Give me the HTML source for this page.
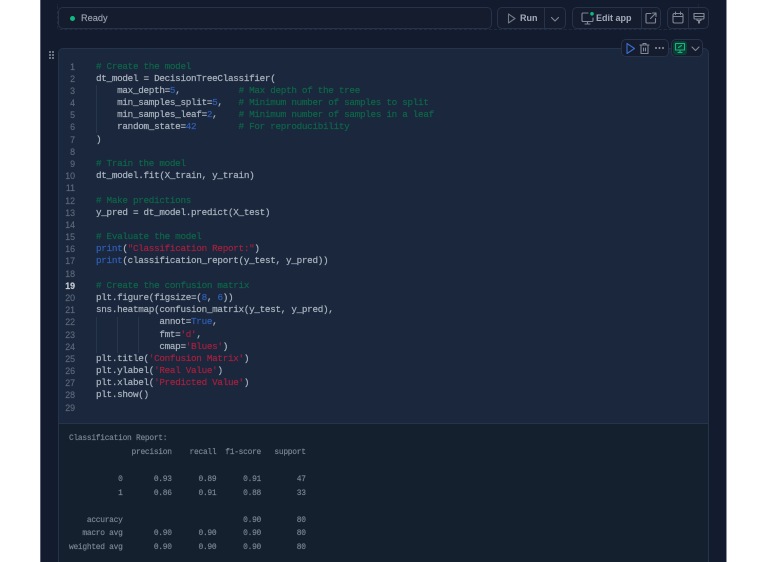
<!DOCTYPE html>
<html><head><meta charset="utf-8">
<style>
html,body{margin:0;padding:0;background:#fff;}
#p{position:relative;width:768px;height:562px;overflow:hidden;background:#fff;font-family:"Liberation Sans",sans-serif;}
#m{position:absolute;left:41px;top:0;width:685px;height:562px;background:#131b2e;border-left:1px solid #5b6472;border-right:1px solid #8b93a0;box-sizing:content-box;margin-left:-1px;}
.a{position:absolute;box-sizing:border-box;}
#cell{left:58px;top:48px;width:651px;height:514px;background:#1a273c;border:1px solid #24344a;border-bottom:0;border-radius:5px 5px 0 0;}
#out{left:58px;top:423px;width:651px;height:139px;background:#15202f;border:1px solid #24344a;border-bottom:0;}
.l{position:absolute;font-family:"Liberation Mono",monospace;font-size:9.3px;letter-spacing:-.3px;line-height:12px;white-space:pre;color:#aab3bf;left:96px;height:12px;margin-top:.6px;-webkit-text-stroke:.2px currentColor;filter:blur(.25px);}
.n{position:absolute;font-family:"Liberation Sans",sans-serif;font-size:8.8px;line-height:12px;color:#5c6a7c;left:60px;width:15px;text-align:right;height:12px;margin-top:.5px;-webkit-text-stroke:.15px currentColor;filter:blur(.2px);}
.c{color:#0e6649}.k{color:#2f5fb5}.s{color:#a3213f}
.o{position:absolute;left:69px;font-family:"Liberation Mono",monospace;font-size:7.9px;letter-spacing:-.27px;line-height:10px;white-space:pre;color:#7c8796;margin-top:1.300px;-webkit-text-stroke:.15px currentColor;filter:blur(.2px);}
.g{position:absolute;width:1px;background:#26364b;}
.btn{border:1px solid #26334a;background:#141c2e;border-radius:5px;}
.sep{position:absolute;top:0;bottom:0;width:1px;background:#26334a;}
svg{position:absolute;fill:none;stroke:#7f8997;stroke-width:1.1;stroke-linecap:round;stroke-linejoin:round;}
</style></head><body>
<div id="p">
<div id="m"></div>

<div class="a" style="left:57px;top:4px;width:642px;height:26px;border:1px dashed #222c3f;border-top:0;border-right:1px dashed #222c3f;border-radius:0 0 3px 3px;"></div>

<div class="a btn" style="left:58px;top:7px;width:434px;height:22px;"></div>
<div class="a" style="left:70px;top:16px;width:5px;height:5px;border-radius:50%;background:#10b981;"></div>
<div class="a" style="left:81px;top:12px;font-size:9.2px;line-height:12px;color:#9aa3b0;-webkit-text-stroke:.15px #9aa3b0;">Ready</div>

<div class="a btn" style="left:497px;top:7px;width:69px;height:22px;">
  <div class="sep" style="left:46px;"></div>
  <svg style="left:7px;top:4px" width="14" height="14" viewBox="0 0 14 14"><path d="M3.500 2v9l6.500-4.500z" stroke="#6f7987"/></svg>
  <div class="a" style="left:22px;top:4px;font-size:9px;font-weight:bold;line-height:12px;color:#a3acb8;">Run</div>
  <svg style="left:51px;top:5px" width="12" height="12" viewBox="0 0 12 12"><path d="M2.500 4.500L6 8l3.500-3.500"/></svg>
</div>

<div class="a btn" style="left:572px;top:7px;width:89px;height:22px;">
  <div class="sep" style="left:68px;"></div>
  <svg style="left:7px;top:3px" width="16" height="15" viewBox="0 0 16 15"><path d="M8 2H3a1 1 0 0 0-1 1v6.500a1 1 0 0 0 1 1h9a1 1 0 0 0 1-1V7M7.500 10.500v2.500M5 13h5"/><circle cx="12" cy="2.800" r="1.800" fill="#10b981" stroke="none"/></svg>
  <div class="a" style="left:23px;top:4px;font-size:9px;font-weight:bold;line-height:12px;color:#a3acb8;white-space:nowrap;">Edit app</div>
  <svg style="left:71px;top:3px" width="14" height="14" viewBox="0 0 14 14"><path d="M7 2.500H3a1 1 0 0 0-1 1v7.500a1 1 0 0 0 1 1h7.500a1 1 0 0 0 1-1V7.500M6.500 7.500L12 2M8.500 2H12v3.500"/></svg>
</div>

<div class="a btn" style="left:667px;top:7px;width:42px;height:22px;">
  <div class="sep" style="left:20px;"></div>
  <svg style="left:3px;top:3px" width="14" height="14" viewBox="0 0 14 14"><rect x="2" y="2.500" width="10" height="9.500" rx="1.500"/><path d="M2 5.500h10M4.500 1v2.500M9.500 1v2.500"/></svg>
  <svg style="left:24px;top:3px" width="14" height="14" viewBox="0 0 14 14"><path d="M2 2.500h10v4.500a1 1 0 0 1-1 1H3a1 1 0 0 1-1-1zM2 5.500h10M5 8v1.500h1.500V12h1V9.500H9V8"/></svg>
</div>

<div class="a" style="left:49px;top:51px;width:2px;height:2px;background:#6a7482;box-shadow:3px 0 #6a7482,0 3px #6a7482,3px 3px #6a7482,0 6px #6a7482,3px 6px #6a7482;"></div>

<div class="a" id="cell"></div>
<div class="a" id="out"></div>

<div class="a btn" style="left:621px;top:39px;width:48px;height:18px;">
  <svg style="left:2px;top:2px" width="13" height="13" viewBox="0 0 13 13"><path d="M3 1.500v10l7.500-5z" stroke="#3a6fd0"/></svg>
  <svg style="left:16px;top:2px" width="13" height="13" viewBox="0 0 13 13"><path d="M2 3h9M5 3V1.500h3V3M3 3v8.500h7V3M5.500 6v3M7.500 6v3"/></svg>
  <div class="a" style="left:33px;top:7px;width:2px;height:2px;border-radius:50%;background:#8e97a5;box-shadow:3.500px 0 #8e97a5,7px 0 #8e97a5;"></div>
</div>
<div class="a btn" style="left:671px;top:39px;width:32px;height:18px;">
  <div class="a" style="left:1px;top:1px;width:14px;height:14px;background:#0d3d33;border-radius:3px;"></div>
  <svg style="left:2px;top:2px" width="12" height="12" viewBox="0 0 12 12"><path d="M1.500 1.500h9v6.500h-9zM6 8v2.500M4 10.500h4M4.500 5.500L7.500 3.500" stroke="#10b981"/></svg>
  <svg style="left:18px;top:3px" width="11" height="11" viewBox="0 0 11 11"><path d="M2 4l3.500 3.500L9 4"/></svg>
</div>

<div class="g" style="left:96px;top:85px;height:48px;"></div>
<div class="g" style="left:96px;top:317px;height:36px;"></div>
<div class="g" style="left:117px;top:317px;height:36px;"></div>
<div class="g" style="left:138px;top:317px;height:36px;"></div>

<div class="n" style="top:60px">1</div><div class="l" style="top:60px"><span class="c"># Create the model</span></div>
<div class="n" style="top:72.200px">2</div><div class="l" style="top:72.200px">dt_model = DecisionTreeClassifier(</div>
<div class="n" style="top:84.400px">3</div><div class="l" style="top:84.400px">    max_depth=<span class="k">5</span>,           <span class="c"># Max depth of the tree</span></div>
<div class="n" style="top:96.500px">4</div><div class="l" style="top:96.500px">    min_samples_split=<span class="k">5</span>,   <span class="c"># Minimum number of samples to split</span></div>
<div class="n" style="top:108.700px">5</div><div class="l" style="top:108.700px">    min_samples_leaf=<span class="k">2</span>,    <span class="c"># Minimum number of samples in a leaf</span></div>
<div class="n" style="top:120.900px">6</div><div class="l" style="top:120.900px">    random_state=<span class="k">42</span>        <span class="c"># For reproducibility</span></div>
<div class="n" style="top:133.100px">7</div><div class="l" style="top:133.100px">)</div>
<div class="n" style="top:145.300px">8</div>
<div class="n" style="top:157.400px">9</div><div class="l" style="top:157.400px"><span class="c"># Train the model</span></div>
<div class="n" style="top:169.600px">10</div><div class="l" style="top:169.600px">dt_model.fit(X_train, y_train)</div>
<div class="n" style="top:181.800px">11</div>
<div class="n" style="top:194px">12</div><div class="l" style="top:194px"><span class="c"># Make predictions</span></div>
<div class="n" style="top:206.200px">13</div><div class="l" style="top:206.200px">y_pred = dt_model.predict(X_test)</div>
<div class="n" style="top:218.300px">14</div>
<div class="n" style="top:230.500px">15</div><div class="l" style="top:230.500px"><span class="c"># Evaluate the model</span></div>
<div class="n" style="top:242.700px">16</div><div class="l" style="top:242.700px"><span class="k">print</span>(<span class="s">"Classification Report:"</span>)</div>
<div class="n" style="top:254.900px">17</div><div class="l" style="top:254.900px"><span class="k">print</span>(classification_report(y_test, y_pred))</div>
<div class="n" style="top:267.100px">18</div>
<div class="n" style="top:279.200px;color:#c3cad3;font-weight:bold">19</div><div class="l" style="top:279.200px"><span class="c"># Create the confusion matrix</span></div>
<div class="n" style="top:291.400px">20</div><div class="l" style="top:291.400px">plt.figure(figsize=(<span class="k">8</span>, <span class="k">6</span>))</div>
<div class="n" style="top:303.600px">21</div><div class="l" style="top:303.600px">sns.heatmap(confusion_matrix(y_test, y_pred),</div>
<div class="n" style="top:315.800px">22</div><div class="l" style="top:315.800px">            annot=<span class="k">True</span>,</div>
<div class="n" style="top:328px">23</div><div class="l" style="top:328px">            fmt=<span class="s">'d'</span>,</div>
<div class="n" style="top:340.100px">24</div><div class="l" style="top:340.100px">            cmap=<span class="s">'Blues'</span>)</div>
<div class="n" style="top:352.300px">25</div><div class="l" style="top:352.300px">plt.title(<span class="s">'Confusion Matrix'</span>)</div>
<div class="n" style="top:364.500px">26</div><div class="l" style="top:364.500px">plt.ylabel(<span class="s">'Real Value'</span>)</div>
<div class="n" style="top:376.700px">27</div><div class="l" style="top:376.700px">plt.xlabel(<span class="s">'Predicted Value'</span>)</div>
<div class="n" style="top:388.900px">28</div><div class="l" style="top:388.900px">plt.show()</div>
<div class="n" style="top:401px">29</div>

<div class="o" style="top:433px">Classification Report:</div>
<div class="o" style="top:446.600px">              precision    recall  f1-score   support</div>
<div class="o" style="top:473.800px">           0       0.93      0.89      0.91        47</div>
<div class="o" style="top:487.400px">           1       0.86      0.91      0.88        33</div>
<div class="o" style="top:514.600px">    accuracy                           0.90        80</div>
<div class="o" style="top:528.200px">   macro avg       0.90      0.90      0.90        80</div>
<div class="o" style="top:541.800px">weighted avg       0.90      0.90      0.90        80</div>
</div>
</body></html>
